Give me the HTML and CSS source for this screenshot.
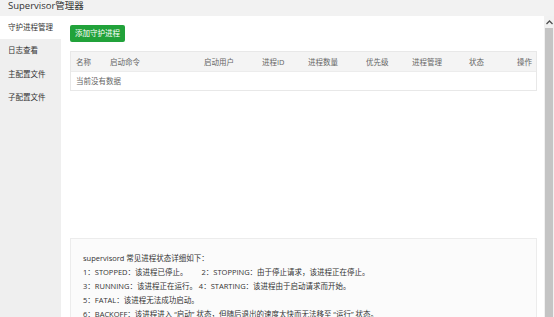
FILE: index.html
```html
<!DOCTYPE html>
<html lang="zh-CN">
<head>
  <meta charset="UTF-8">
  <title>Supervisor管理器</title>
  <link rel="stylesheet" href="styles.css">
</head>
<body>
  <div class="topbar">Supervisor管理器</div>

  <div class="layout">
    <!-- 左侧菜单 -->
    <div class="sidebar">
      <div class="nav-item active">守护进程管理</div>
      <div class="nav-item">日志查看</div>
      <div class="nav-item">主配置文件</div>
      <div class="nav-item">子配置文件</div>
    </div>

    <!-- 主内容 -->
    <div class="main">
      <div class="toolbar">
        <a href="#" class="btn-add">添加守护进程</a>
      </div>

      <div class="proc-table">
        <div class="proc-head">
          <div>名称</div>
          <div>启动命令</div>
          <div>启动用户</div>
          <div>进程ID</div>
          <div>进程数量</div>
          <div>优先级</div>
          <div>进程管理</div>
          <div>状态</div>
          <div>操作</div>
        </div>
        <div class="proc-empty">当前没有数据</div>
      </div>

      <div class="notice">
        <p>supervisord 常见进程状态详细如下：</p>
        <p>1<span class="pn">：</span>STOPPED<span class="pn">：</span>该进程已停止。<span class="gap"></span>2<span class="pn">：</span>STOPPING<span class="pn">：</span>由于停止请求<span class="pn">，</span>该进程正在停止。</p>
        <p>3<span class="pn">：</span>RUNNING<span class="pn">：</span>该进程正在运行。 4<span class="pn">：</span>STARTING<span class="pn">：</span>该进程由于启动请求而开始。</p>
        <p>5<span class="pn">：</span>FATAL<span class="pn">：</span>该进程无法成功启动。</p>
        <p>6<span class="pn">：</span>BACKOFF<span class="pn">：</span>该进程进入 “启动” 状态<span class="pn">，</span>但随后退出的速度太快而无法移至 “运行” 状态。</p>
      </div>
    </div>

    <!-- 滚动条 -->
    <div class="scrollbar">
      <div class="scroll-arrow">
        <svg width="7" height="5" viewBox="0 0 7 5"><path d="M0.5 4 L3.5 1 L6.5 4" fill="none" stroke="#505050" stroke-width="1.3"/></svg>
      </div>
      <div class="scroll-thumb"></div>
    </div>
  </div>
</body>
</html>
```

FILE: styles.css
```css
/* ===============================
   BASE
=============================== */
html, body {
  margin: 0;
  padding: 0;
  width: 554px;
  height: 317px;
  overflow: hidden;
  background: #fff;
}
body {
  font-family: "Open Sans", "Noto Sans CJK SC", sans-serif;
  font-size: 7.5px;
  color: #333;
}

/* 顶部标题 */
.topbar {
  height: 16px;
  line-height: 11px;
  padding-left: 8px;
  font-size: 9.5px;
  color: #333;
  background: #f2f2f2;
}

.layout {
  display: flex;
  height: 301px;
}

/* ===============================
   SIDEBAR
=============================== */
.sidebar {
  width: 61px;
  flex-shrink: 0;
  background: #efefef;
}
.nav-item {
  height: 23.4px;
  line-height: 23.4px;
  padding-left: 8px;
  color: #333;
  white-space: nowrap;
}
.nav-item.active {
  background: #fff;
}

/* ===============================
   MAIN
=============================== */
.main {
  flex: 1;
  padding: 9px 7px 0 9px;
  display: flex;
  flex-direction: column;
}
.toolbar {
  display: flex;
  margin-bottom: 9px;
}
.btn-add {
  display: inline-block;
  height: 17px;
  line-height: 17px;
  padding: 0 5px;
  background: #21a23a;
  color: #fff;
  border-radius: 2px;
  text-decoration: none;
}

/* 表格 */
.proc-table {
  border: 1px solid #e8e8e8;
}
.proc-head {
  display: grid;
  grid-template-columns: 34px 94px 58px 46px 58px 46px 57px 48px 1fr;
  height: 19px;
  align-items: center;
  background: #f4f4f4;
  border-bottom: 1px solid #ececec;
  color: #666;
}
.proc-head div {
  padding-left: 5px;
  white-space: nowrap;
}
.proc-empty {
  height: 18px;
  line-height: 18px;
  padding-left: 5px;
  color: #666;
}

/* 状态说明 */
.notice {
  margin-top: 147px;
  padding: 12px 12px 0 12px;
  background: #fbfbfb;
  border: 1px solid #ececec;
  border-bottom: none;
  flex: 1;
}
.notice p {
  margin: 0;
  line-height: 14px;
  color: #333;
  white-space: nowrap;
}
/* 全角标点居中 */
.pn {
  font-family: "Noto Sans CJK TC", sans-serif;
}
.gap {
  display: inline-block;
  width: 14px;
}

/* ===============================
   SCROLLBAR
=============================== */
.scrollbar {
  width: 10px;
  flex-shrink: 0;
  background: #f1f1f1;
  display: flex;
  flex-direction: column;
  align-items: center;
}
.scroll-arrow {
  height: 12px;
  display: flex;
  align-items: center;
  justify-content: center;
}
.scroll-thumb {
  width: 8px;
  flex: 1;
  background: #c4c4c4;
}
```
